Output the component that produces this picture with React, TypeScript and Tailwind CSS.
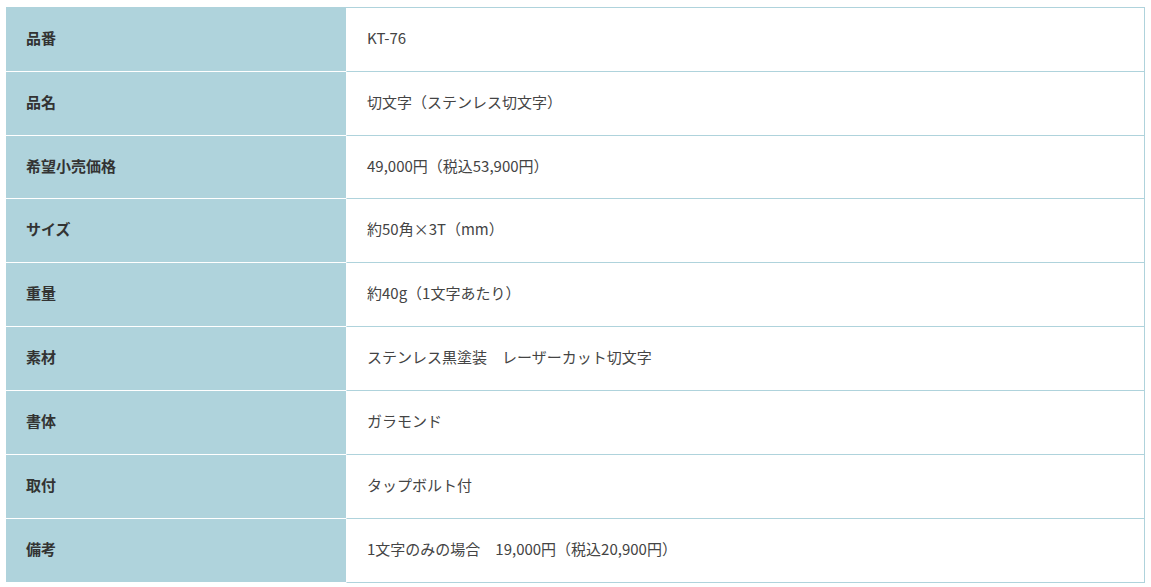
import React from "react";

const rows: [string, string][] = [
  ["品番", "KT-76"],
  ["品名", "切文字（ステンレス切文字）"],
  ["希望小売価格", "49,000円（税込53,900円）"],
  ["サイズ", "約50角×3T（mm）"],
  ["重量", "約40g（1文字あたり）"],
  ["素材", "ステンレス黒塗装　レーザーカット切文字"],
  ["書体", "ガラモンド"],
  ["取付", "タップボルト付"],
  ["備考", "1文字のみの場合　19,000円（税込20,900円）"],
];

export default function App() {
  return (
    <div
      className="w-[1151px] h-[587px] bg-white pt-[7px] pl-[6px]"
      style={{ fontFamily: '"Noto Sans CJK JP", "Noto Sans", sans-serif' }}
    >
      <div className="w-[1139px] border-t border-[#afd3dc] flex flex-col">
        {rows.map(([k, v], i) => (
          <div
            key={i}
            className={
              i === 2
                ? "grid grid-cols-[340px_1fr] h-[63px]"
                : "grid grid-cols-[340px_1fr] h-[64px]"
            }
          >
            <div className="bg-[#afd3dc] border-b border-white flex items-center pl-[20px] pb-[2px] text-[15px] font-bold text-[#333]">
              {k}
            </div>
            <div className="border-b border-r border-l border-[#afd3dc] border-l-white flex items-center pl-[20px] pb-[2px] text-[15px] text-[#444]">
              {v}
            </div>
          </div>
        ))}
      </div>
    </div>
  );
}
